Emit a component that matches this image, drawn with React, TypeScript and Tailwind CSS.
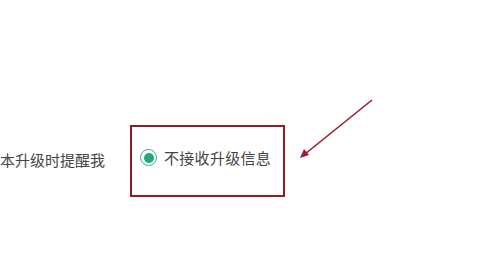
export default function App() {
  return (
    <div
      className="relative w-[500px] h-[277px] bg-white overflow-hidden text-[#444]"
      style={{ fontFamily: '"Noto Sans CJK SC", "Noto Sans", sans-serif' }}
    >
      <div className="flex items-center pt-[125px]">
        <span className="ml-[-30px] mb-[4px] text-[15px] leading-none whitespace-nowrap w-[160px]">新版本升级时提醒我</span>
        <div className="flex items-center w-[155px] h-[72px] border-2 border-[#8e1b2e] pl-[8px] pb-[7px]">
          <span className="flex items-center justify-center w-[17px] h-[17px] rounded-full border border-[#2bb383]">
            <span className="w-[10px] h-[10px] rounded-full bg-[#22a97a]" />
          </span>
          <span className="ml-[7px] text-[15px] leading-none whitespace-nowrap tracking-[0.3px]">不接收升级信息</span>
        </div>
      </div>
      <svg className="absolute left-0 top-0" width="500" height="277">
        <line x1="372" y1="100" x2="305" y2="154" stroke="#9b1b30" strokeWidth="1.6" />
        <polygon points="300,158 304,149 309,155" fill="#9b1b30" />
      </svg>
    </div>
  );
}
